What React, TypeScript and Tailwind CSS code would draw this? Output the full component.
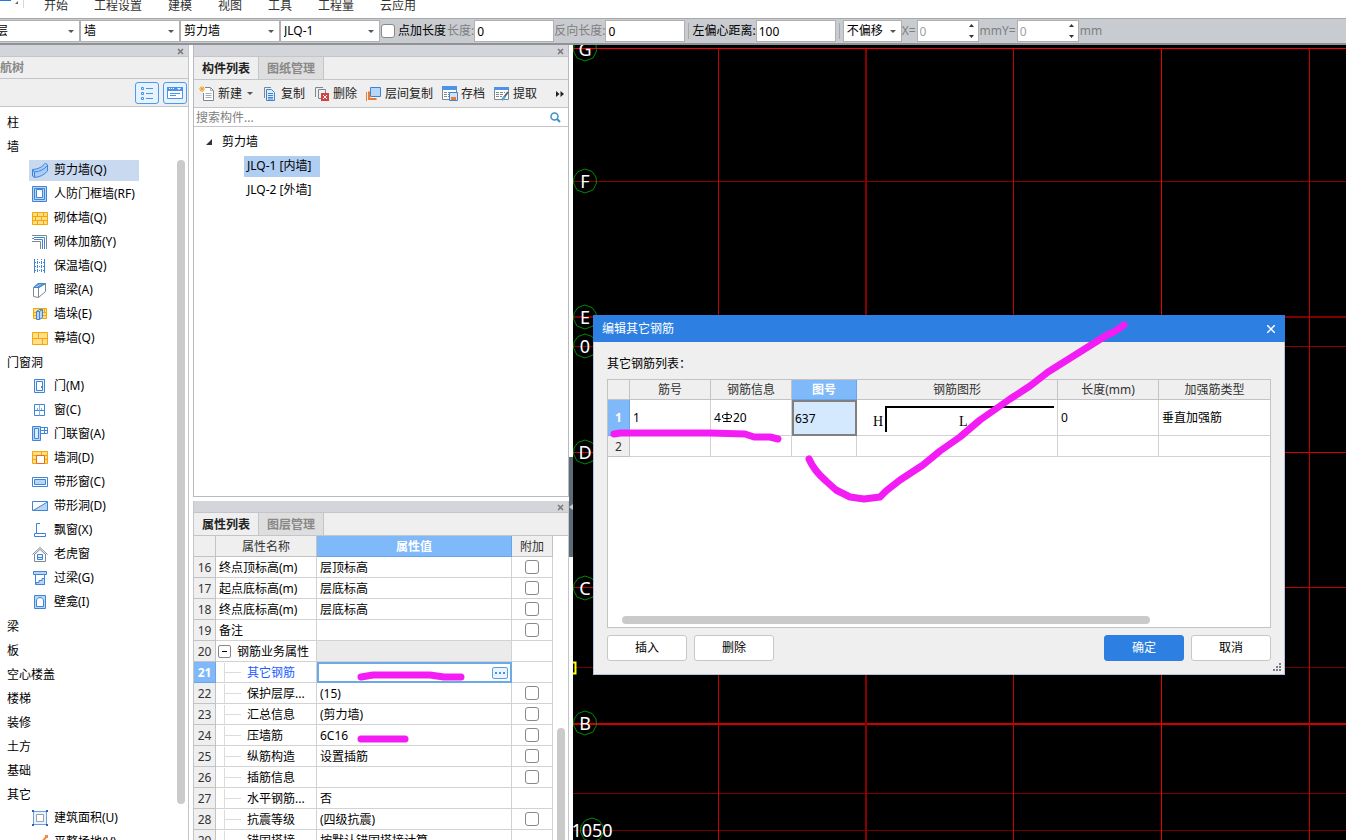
import { useState, type ReactNode } from "react";

const BLUE = "#3f84d6";
const SKY = "#b9d6f7";
const ORANGE = "#f5a900";
const SAND = "#ffdf8e";
const GRAY = "#7d8791";

const icons: Record<string, ReactNode> = {
  shearWall: (
    <>
      <path d="M.5 7.500C7 7 10 5 13.500 1L15.500 3V9C12 13 8 15 2.500 15.500L.5 14z" fill="#a9cdf8" stroke={BLUE} />
      <path d="M1 8l1.500 2C8 9.500 12 7.500 15.500 3.500M2.500 10V15" fill="none" stroke={BLUE} />
    </>
  ),
  frameWall: (
    <>
      <path d="M.5.5h14v15H.5z" fill={SKY} stroke={BLUE} />
      <path d="M2.500 2.500h10v11h-10z" fill={SKY} stroke={BLUE} />
      <path d="M4.500 3.500h6v8h-6z" fill="#fff" stroke={BLUE} />
    </>
  ),
  brick: (
    <path d="M.5 2.500h15v12H.5zM.5 6.500h15M.5 10.500h15M5.500 2.500v4M11.500 2.500v4M3.500 6.500v4M9.500 6.500v4M5.500 10.500v4M11.500 10.500v4" fill={SAND} stroke={ORANGE} />
  ),
  rebarWall: (
    <>
      <path d="M0 1.500h14.500V15M0 4.500h2M0 7.500h8.500V15" fill="none" stroke={GRAY} />
      <path d="M2 3.500h10.500V15M2 5.500h8.500V15" fill="none" stroke={BLUE} />
    </>
  ),
  insulation: (
    <>
      <path d="M2.500 1v14M12.500 1v14" stroke={BLUE} />
      <path d="M5.500 1v14M9.500 1v14M3 4.500h9M3 8.500h9M3 12.500h9" stroke={BLUE} strokeDasharray="1 1" />
    </>
  ),
  hiddenBeam: (
    <>
      <path d="M1.500 5.500L6 1.500h7.500l-4 4z" fill={SKY} stroke={BLUE} />
      <path d="M1.500 5.500h5v10l-5-1zM6.500 5.500l7-4v8l-7 6" fill="#fff" stroke={GRAY} />
      <path d="M2 5.500h5l6.500-4M3 4.500l5-3M5 5.500l6-4" stroke={BLUE} fill="none" />
    </>
  ),
  pier: (
    <>
      <path d="M1.500 2.500h13v10h-13zM1.500 6.500h13M1.500 9.500h13M12.500 2.500v4" fill={SAND} stroke={ORANGE} />
      <path d="M4.500 5.500l3-2h3v8l-3 2h-3zM7.500 5.500v8M4.500 5.500h3l3-2" fill={SKY} stroke={BLUE} />
    </>
  ),
  curtain: (
    <path d="M.5 2.500h15v12H.5zM.5 8.500h15M6.500 2.500v6M10.500 8.500v6" fill={SAND} stroke={ORANGE} />
  ),
  door: (
    <>
      <path d="M2.500 1.500h10v13h-10z" fill="#e6f1fd" stroke={BLUE} />
      <path d="M4.500 3.500h6v9h-6z" fill="#fff" stroke={BLUE} />
      <path d="M9 8h1v2H9z" fill={BLUE} />
    </>
  ),
  window: (
    <>
      <path d="M2.500 2.500h10v11h-10zM2.500 8.500h10" fill="#fff" stroke={BLUE} />
      <path d="M7.500 2.500v11M5.500 6v2M9.500 6v2" stroke="#7fb0ea" />
    </>
  ),
  doorWindow: (
    <>
      <path d="M.5.5h8v14h-8z" fill={SKY} stroke={BLUE} />
      <path d="M2.500 2.500h4v10h-4z" fill="#dcebfc" stroke={BLUE} />
      <path d="M8.500 1.500h7v6h-7zM12.500 1.500v6M8.500 4.500h7" fill="#fff" stroke={BLUE} />
    </>
  ),
  wallHole: (
    <>
      <path d="M.5 1.500h15v12H.5zM.5 5.500h15M.5 9.500h15M9.500 1.500v4" fill={SAND} stroke={ORANGE} />
      <path d="M4.500 5.500h8v8h-8z" fill="#fff" stroke="#ea6a20" />
    </>
  ),
  stripWindow: (
    <>
      <path d="M.5 3.500h15v9H.5z" fill="#fff" stroke={BLUE} />
      <path d="M2.500 5.500h11v5h-11z" fill={SKY} stroke={BLUE} />
    </>
  ),
  stripHole: (
    <>
      <path d="M.5 3.500h15v9H.5z" fill="#fff" stroke={BLUE} />
      <path d="M1 12.500L15.500 4v8.500z" fill={SKY} stroke={BLUE} />
    </>
  ),
  bayWindow: <path d="M8 1.500H4.500v10M2.500 11.500h11v3h-11z" fill="none" stroke={BLUE} />,
  dormer: (
    <>
      <path d="M.5 8.500l7.500-7 7.500 7M2.500 8v7.500h11V8" fill="none" stroke={GRAY} />
      <path d="M3 8l5-4.500L13 8" fill="none" stroke={GRAY} />
      <path d="M5.500 8.500h5v5h-5zM5.500 11.500h5" fill="#e6f1fd" stroke={BLUE} />
    </>
  ),
  lintel: (
    <>
      <path d="M1.500 1.500h13v3h-13z" fill={SKY} stroke={BLUE} />
      <path d="M3.500 4.500h9v10h-9z" fill="#fff" stroke={BLUE} />
      <path d="M4 12.500h3v-2h3v-2h2.500v6H4z" fill={SKY} stroke={BLUE} />
    </>
  ),
  niche: (
    <>
      <path d="M2.500 1.500h11v13h-11z" fill={SKY} stroke={BLUE} />
      <path d="M4.500 12.500V7c0-4.500 7-4.500 7 0v5.500z" fill="#fff" stroke={BLUE} />
    </>
  ),
  area: (
    <>
      <path d="M1.500 1.500h13v13h-13z" fill="#eaf3fd" stroke="#6b9fe0" />
      <path d="M4.500 4.500h7v7h-7z" fill="#fff" stroke="#9aa0a8" />
      <path d="M0 0h2v2H0zM14 0h2v2h-2zM0 14h2v2H0zM14 14h2v2h-2z" fill="#35619c" />
    </>
  ),
  ground: <path d="M2 12l5-4 2 1 6-7M13 2h2v2M6 9l3 3" fill="none" stroke="#f08a4b" strokeWidth="2" />,
  create: (
    <>
      <path d="M6 1.500h5.500l3 3v10h-10V7" fill="#fff" stroke={GRAY} />
      <path d="M11.500 1.500v3h3M6.500 7.500h6M6.500 9.500h6M6.500 11.500h6" fill="none" stroke="#a7adb4" />
      <path d="M1 1l4 4M5 1L1 5M3 0v6M0 3h6" stroke="#f6a11f" />
    </>
  ),
  copy: (
    <>
      <path d="M9 1.500H2.500V12" fill="none" stroke={GRAY} />
      <path d="M4.500 3.500h5l3 3v8h-8z" fill="#dcebfc" stroke={BLUE} />
      <path d="M6 7.500h5M6 9.500h5M6 11.500h5M6 13h5" stroke={BLUE} />
    </>
  ),
  remove: (
    <>
      <path d="M9 1.500H1.500V11M11.500 7V3.500h-7v9H7" fill="none" stroke={GRAY} />
      <path d="M7 7h8v8H7z" fill="#cf4343" />
      <path d="M9 9l4 4M13 9l-4 4" stroke="#fff" />
    </>
  ),
  layerCopy: (
    <>
      <path d="M.5 6v9" fill="none" stroke="#ee7a2d" />
      <path d="M3 5.500v7.500h7.500" fill="none" stroke="#ee7a2d" strokeWidth="2" />
      <path d="M4.500 1.500h10v9h-10z" fill={SKY} stroke={BLUE} />
    </>
  ),
  archive: (
    <>
      <path d="M.5.5h14v13H.5z" fill="#fff" stroke={GRAY} />
      <path d="M0 0h15v4H0z" fill="#4d94e8" />
      <path d="M2 6.500h11M2 8.500h6M2 10.500h5" stroke={GRAY} strokeDasharray="3 1" />
      <path d="M7.500 6.500h8v8h-8z" fill="#cfe2fa" stroke={BLUE} />
      <path d="M9 11h5v3H9z" fill="#ee7a2d" />
    </>
  ),
  extract: (
    <>
      <path d="M.5 1.500h14v12H.5z" fill="#fff" stroke={GRAY} />
      <path d="M0 1h15v3H0z" fill="#4d94e8" />
      <path d="M2 6.500h9M2 8.500h7M2 10.500h6" stroke={GRAY} strokeDasharray="3 1" />
      <path d="M8 14l6-8" stroke="#5d6670" strokeWidth="2" />
      <path d="M8 14l3-3" stroke="#42b4e6" strokeWidth="2" />
    </>
  ),
};

function Icon({ name }: { name: string }) {
  return (
    <svg width="16" height="16" viewBox="0 0 16 16" className="shrink-0" aria-hidden="true">
      {icons[name]}
    </svg>
  );
}

type Node = { label: string; children?: [string, string][] };

const tree: Node[] = [
  { label: "柱" },
  {
    label: "墙",
    children: [
      ["shearWall", "剪力墙(Q)"],
      ["frameWall", "人防门框墙(RF)"],
      ["brick", "砌体墙(Q)"],
      ["rebarWall", "砌体加筋(Y)"],
      ["insulation", "保温墙(Q)"],
      ["hiddenBeam", "暗梁(A)"],
      ["pier", "墙垛(E)"],
      ["curtain", "幕墙(Q)"],
    ],
  },
  {
    label: "门窗洞",
    children: [
      ["door", "门(M)"],
      ["window", "窗(C)"],
      ["doorWindow", "门联窗(A)"],
      ["wallHole", "墙洞(D)"],
      ["stripWindow", "带形窗(C)"],
      ["stripHole", "带形洞(D)"],
      ["bayWindow", "飘窗(X)"],
      ["dormer", "老虎窗"],
      ["lintel", "过梁(G)"],
      ["niche", "壁龛(I)"],
    ],
  },
  { label: "梁" },
  { label: "板" },
  { label: "空心楼盖" },
  { label: "楼梯" },
  { label: "装修" },
  { label: "土方" },
  { label: "基础" },
  {
    label: "其它",
    children: [
      ["area", "建筑面积(U)"],
      ["ground", "平整场地(V)"],
    ],
  },
];

type Row = { n: number; name: string; value?: string; check?: boolean; kind?: "group" | "child" };

const rows: Row[] = [
  { n: 16, name: "终点顶标高(m)", value: "层顶标高", check: true },
  { n: 17, name: "起点底标高(m)", value: "层底标高", check: true },
  { n: 18, name: "终点底标高(m)", value: "层底标高", check: true },
  { n: 19, name: "备注", check: true },
  { n: 20, name: "钢筋业务属性", kind: "group" },
  { n: 21, name: "其它钢筋", kind: "child" },
  { n: 22, name: "保护层厚...", value: "(15)", check: true, kind: "child" },
  { n: 23, name: "汇总信息", value: "(剪力墙)", check: true, kind: "child" },
  { n: 24, name: "压墙筋", value: "6C16", check: true, kind: "child" },
  { n: 25, name: "纵筋构造", value: "设置插筋", check: true, kind: "child" },
  { n: 26, name: "插筋信息", check: true, kind: "child" },
  { n: 27, name: "水平钢筋...", value: "否", kind: "child" },
  { n: 28, name: "抗震等级", value: "(四级抗震)", check: true, kind: "child" },
  { n: 29, name: "锚固搭接", value: "按默认锚固搭接计算", kind: "child" },
];

const hLines = [
  { y: 3, c: "#ff0000", w: 1 },
  { y: 136, c: "#8c0000", w: 1 },
  { y: 271, c: "#800000", w: 2 },
  { y: 301, c: "#900000", w: 1 },
  { y: 407, c: "#d80000", w: 1 },
  { y: 542, c: "#c00000", w: 1 },
  { y: 622, c: "#700000", w: 1 },
  { y: 678, c: "#d00000", w: 2 },
  { y: 748, c: "#800000", w: 1 },
  { y: 785, c: "#700000", w: 1 },
];

const vLines = [
  { x: 145, c: "#c80000", w: 1 },
  { x: 292, c: "#880000", w: 2 },
  { x: 440, c: "#c80000", w: 1 },
  { x: 588, c: "#f00000", w: 1 },
  { x: 736, c: "#c00000", w: 1 },
];

const axes = [
  { t: "G", x: 12, y: 4 },
  { t: "F", x: 12, y: 136 },
  { t: "E", x: 12, y: 272 },
  { t: "0", x: 12, y: 301 },
  { t: "D", x: 12, y: 407 },
  { t: "C", x: 12, y: 543 },
  { t: "B", x: 12, y: 678 },
  { t: "1050", x: 19, y: 785 },
];

function PanelStrip() {
  return (
    <div className="flex h-3 shrink-0 items-center justify-end border-b border-[#c3c5cb] bg-[#d3d5da] pr-1">
      <button aria-label="关闭面板" className="flex pt-px">
        <svg width="7" height="7" viewBox="0 0 7 7">
          <path d="M1 1l5 5M6 1L1 6" stroke="#777" strokeWidth="1.500" />
        </svg>
      </button>
    </div>
  );
}

function Tabs({ items }: { items: string[] }) {
  const [active, setActive] = useState(0);
  return (
    <div role="tablist" className="flex h-[23px] shrink-0 border-b border-[#c3c5cb] bg-[#efefef]">
      {items.map((t, i) => (
        <button
          key={t}
          role="tab"
          aria-selected={i === active}
          onClick={() => setActive(i)}
          className={`w-[65px] border-r border-[#c3c5cb] pt-0.5 text-center font-bold ${
            i === active ? "bg-[#efefef] text-[#222]" : "bg-[#dedede] text-[#888]"
          }`}
        >
          {t}
        </button>
      ))}
    </div>
  );
}

function Combo({ label, options, className }: { label: string; options: string[]; className: string }) {
  return (
    <div className={`relative h-[22px] shrink-0 ${className}`}>
      <select aria-label={label} className="h-full w-full appearance-none border border-[#b0b0b0] bg-white pl-[3px] text-black">
        {options.map((o) => (
          <option key={o}>{o}</option>
        ))}
      </select>
      <svg width="6" height="3" viewBox="0 0 6 3" className="pointer-events-none absolute top-[10px] right-[6px]">
        <path d="M0 0h6L3 3z" fill="#555" />
      </svg>
    </div>
  );
}

function Field({ label, value, dim }: { label: string; value: string; dim?: boolean }) {
  return (
    <label className="flex shrink-0 items-center">
      <span className={dim ? "text-[#808080]" : "text-black"}>{label}</span>
      <input defaultValue={value} className="h-[22px] w-20 border border-[#b0b0b0] bg-white px-0.5 text-black" />
    </label>
  );
}

function Spin({ label }: { label: string }) {
  return (
    <label className="flex shrink-0 items-center gap-px text-[#808080]">
      {label}
      <span className="flex h-[22px] w-[62px] items-center border border-[#b0b0b0] bg-white pr-1">
        <input defaultValue="0" disabled className="h-full min-w-0 flex-1 pl-0.5 text-[#a0a0a0]" />
        <svg width="5" height="14" viewBox="0 0 5 14">
          <path d="M0 3h5L2.500 0zM0 11h5l-2.500 3z" fill="#333" />
        </svg>
      </span>
      mm
    </label>
  );
}

function OptionBar() {
  return (
    <div className="flex h-[27px] shrink-0 items-center overflow-hidden border-t border-b-2 border-t-[#a8a8a8] border-b-[#909298] bg-[#c8cbd0] whitespace-nowrap">
      <Combo label="楼层" options={["首层"]} className="-ml-5 w-[100px]" />
      <Combo label="构件类别" options={["墙"]} className="w-[100px]" />
      <Combo label="构件类型" options={["剪力墙"]} className="w-[100px]" />
      <Combo label="构件" options={["JLQ-1", "JLQ-2"]} className="w-[100px]" />
      <label className="mr-px ml-px flex shrink-0 items-center gap-[3px] text-black">
        <input type="checkbox" className="size-[14px] appearance-none rounded-[3px] border border-[#888] bg-white" />
        点加长度
      </label>
      <Field label="长度:" value="0" dim />
      <Field label="反向长度:" value="0" dim />
      <span className="mx-[3px] h-4 w-px shrink-0 bg-[#a8a8a8]" />
      <Field label="左偏心距离:" value="100" />
      <span className="mx-[3px] h-4 w-px shrink-0 bg-[#a8a8a8]" />
      <Combo label="偏移方式" options={["不偏移"]} className="w-[59px]" />
      <Spin label="X=" />
      <Spin label="Y=" />
    </div>
  );
}

function NavTree() {
  const [current, setCurrent] = useState("剪力墙(Q)");
  return (
    <aside className="flex w-[189px] shrink-0 flex-col border-r border-[#c3c5cb]">
      <PanelStrip />
      <div className="h-[22px] shrink-0 overflow-hidden border-b border-[#c3c5cb] bg-[#efefef] leading-[22px] font-bold text-[#888]">
        <span className="-ml-3">导航树</span>
      </div>
      <div className="flex h-7 shrink-0 items-center justify-end gap-1 border-b border-[#c3c5cb] bg-[#efefef] pr-px">
        <button aria-label="列表" className="flex h-[22px] w-6 items-center justify-center rounded-[3px] border border-[#4a9af0] bg-[#e6f2fe]">
          <svg width="14" height="14" viewBox="0 0 14 14" fill="none" stroke="#4a94e6">
            <path d="M1.500 1.500h2v2h-2zM1.500 6.500h2v2h-2zM1.500 11.500h2v2h-2zM6 2.500h7M6 7.500h7M6 12.500h7" />
          </svg>
        </button>
        <button aria-label="窗口" className="flex h-[22px] w-6 items-center justify-center rounded-[3px] border border-[#4a9af0] bg-[#e6f2fe]">
          <svg width="16" height="14" viewBox="0 0 16 14">
            <path d="M.5 1.500h15v11H.5z" fill="#fff" stroke="#4a94e6" />
            <path d="M0 1h16v4H0z" fill="#4a94e6" />
            <path d="M2 2.500h1M4 2.500h1M6 2.500h1" stroke="#fff" />
            <path d="M10 2h4l-2 2z" fill="#fff" />
            <path d="M3 7.500h10M3 9.500h6" stroke="#4a94e6" />
          </svg>
        </button>
      </div>
      <div className="flex min-h-0 flex-1 bg-white">
        <ul className="min-w-0 flex-1 overflow-hidden pt-[3px]">
          {tree.map((g) => (
            <li key={g.label}>
              <button className="block h-6 pt-px pl-[7px]">{g.label}</button>
              {g.children && (
                <ul>
                  {g.children.map(([icon, label]) => (
                    <li key={label} className="flex h-6 items-center pl-[29px]">
                      <button
                        onClick={() => setCurrent(label)}
                        className={`flex h-[21px] w-[110px] items-center gap-1.5 pl-[3px] whitespace-nowrap ${
                          label === current ? "bg-[#c9d9f0]" : ""
                        }`}
                      >
                        <Icon name={icon} />
                        {label}
                      </button>
                    </li>
                  ))}
                </ul>
              )}
            </li>
          ))}
        </ul>
        <div className="w-[11px] shrink-0 pt-[53px]">
          <div className="h-[644px] w-2 rounded-full bg-[#cacaca]" />
        </div>
      </div>
    </aside>
  );
}

function Tool({ icon, label, menu }: { icon: string; label: string; menu?: boolean }) {
  return (
    <button className="flex shrink-0 items-center gap-[3px] text-[#222]">
      <Icon name={icon} />
      <span className="pt-px">{label}</span>
      {menu && (
        <svg width="8" height="3" viewBox="0 0 8 3">
          <path d="M2 0h6L5 3z" fill="#555" />
        </svg>
      )}
    </button>
  );
}

function ComponentPanel() {
  return (
    <section className="flex min-h-0 flex-[452] flex-col border-x border-b border-[#b8babf] bg-white">
      <PanelStrip />
      <Tabs items={["构件列表", "图纸管理"]} />
      <div className="flex h-7 shrink-0 items-center gap-[9px] border-b border-[#c3c5cb] bg-[#efefef] pr-1 pl-[5px] whitespace-nowrap">
        <Tool icon="create" label="新建" menu />
        <Tool icon="copy" label="复制" />
        <Tool icon="remove" label="删除" />
        <Tool icon="layerCopy" label="层间复制" />
        <Tool icon="archive" label="存档" />
        <Tool icon="extract" label="提取" />
        <button aria-label="更多" className="ml-auto">
          <svg width="8" height="6" viewBox="0 0 8 6">
            <path d="M0 0l3.500 3L0 6zM4.500 0L8 3 4.500 6z" fill="#222" />
          </svg>
        </button>
      </div>
      <div className="flex h-[19px] shrink-0 items-center border-b border-[#c3c5cb] pr-[7px] pl-0.5">
        <input aria-label="搜索构件" placeholder="搜索构件..." className="h-[18px] min-w-0 flex-1 pt-px placeholder:text-[#808080]" />
        <svg width="11" height="11" viewBox="0 0 11 11" fill="none" stroke="#3d8fc8">
          <circle cx="4.500" cy="4.500" r="3.500" strokeWidth="1.500" />
          <path d="M7 7l3 3" strokeWidth="2" />
        </svg>
      </div>
      <ul className="pt-[3px]">
        <li className="flex h-6 items-center gap-2.5 pl-3">
          <svg width="6" height="6" viewBox="0 0 6 6">
            <path d="M6 0v6H0z" fill="#333" />
          </svg>
          剪力墙
        </li>
        <li className="flex h-6 items-center pl-[50px]">
          <button className="h-[21px] w-[76px] bg-[#b0cdf2] px-[3px] text-left">JLQ-1 [内墙]</button>
        </li>
        <li className="flex h-6 items-center pl-[50px]">
          <button className="h-[21px] w-[76px] px-[3px] text-left">JLQ-2 [外墙]</button>
        </li>
      </ul>
    </section>
  );
}

function PropertyRow({ row }: { row: Row }) {
  const active = row.n === 21;
  const cell = "h-[21px] border-r border-b border-[#d2d2d2] p-0 pt-px";
  return (
    <tr>
      <th
        className={`h-[21px] border-r border-b p-0 pt-px text-center ${
          active ? "border-[#6aa5e6] bg-[#80b9f9] font-bold text-white" : "border-[#c3c3c3] bg-[#efefef] font-normal text-[#333]"
        }`}
      >
        {row.n}
      </th>
      <td className={`${cell} ${active ? "text-[#1a5cff]" : ""}`}>
        {row.kind === "child" ? (
          <div className="flex h-[19px] items-center gap-[5px] pl-2">
            <svg width="18" height="19" viewBox="0 0 18 19">
              <path d="M.5 0v19M.5 9.500H17" stroke="#dcdcdc" fill="none" />
            </svg>
            {row.name}
          </div>
        ) : row.kind === "group" ? (
          <div className="flex h-[19px] items-center gap-1.5 pl-0.5">
            <button aria-label="折叠" className="flex size-[13px] items-center justify-center rounded-[2px] border border-[#888] bg-white">
              <span className="h-px w-[5px] bg-black" />
            </button>
            {row.name}
          </div>
        ) : (
          <div className="pl-[3px]">{row.name}</div>
        )}
      </td>
      {active ? (
        <td className="h-[21px] p-0">
          <div className="flex h-[21px] items-center border-2 border-[#6aaae8] bg-white pr-0.5">
            <input aria-label="其它钢筋" className="h-4 min-w-0 flex-1 px-0.5" />
            <button aria-label="编辑" className="flex h-3 w-4 items-center justify-center rounded-[2px] border border-[#5c9fde] bg-[#eaf4fe]">
              <svg width="10" height="2" viewBox="0 0 10 2">
                <path d="M0 0h2v2H0zM4 0h2v2H4zM8 0h2v2H8z" fill="#4a90d9" />
              </svg>
            </button>
          </div>
        </td>
      ) : (
        <td className={`${cell} ${row.kind === "group" ? "bg-[#ebebeb]" : ""}`}>
          <div className="pl-[3px]">{row.value}</div>
        </td>
      )}
      <td className="h-[21px] border-r border-b border-[#d2d2d2] p-0">
        {row.check && (
          <input
            type="checkbox"
            aria-label={`${row.name} 附加`}
            className="mx-auto block size-[14px] appearance-none rounded-[3px] border border-[#888] bg-white"
          />
        )}
      </td>
    </tr>
  );
}

function PropertyPanel() {
  const head = "h-[21px] border-r border-b p-0 pt-px text-center";
  return (
    <section className="flex min-h-0 flex-[339] flex-col overflow-hidden border-x border-[#c3c5cb] bg-white">
      <PanelStrip />
      <Tabs items={["属性列表", "图层管理"]} />
      <div className="flex min-h-0 flex-1">
        <div className="min-w-0 flex-1 overflow-hidden">
          <table className="w-full table-fixed border-separate border-spacing-0 leading-[19px] whitespace-nowrap">
            <colgroup>
              <col className="w-[22px]" />
              <col className="w-[101px]" />
              <col />
              <col className="w-[41px]" />
            </colgroup>
            <thead>
              <tr>
                <th className={`${head} border-[#c3c3c3] bg-[#efefef]`} />
                <th className={`${head} border-[#c3c3c3] bg-[#efefef] font-normal text-[#333]`}>属性名称</th>
                <th className={`${head} border-[#6aa5e6] bg-[#80b9f9] font-bold text-white`}>属性值</th>
                <th className={`${head} border-[#c3c3c3] bg-[#efefef] font-normal text-[#333]`}>附加</th>
              </tr>
            </thead>
            <tbody>
              {rows.map((r) => (
                <PropertyRow key={r.n} row={r} />
              ))}
            </tbody>
          </table>
        </div>
        <div className="flex w-[15px] shrink-0 justify-center pt-48">
          <div className="w-2 rounded-t-full bg-[#cacaca]" />
        </div>
      </div>
    </section>
  );
}

function Drawing() {
  return (
    <svg className="block h-full w-full" aria-label="轴网">
      {hLines.map((l) => (
        <rect key={l.y} x="0" y={l.y} width="100%" height={l.w} fill={l.c} />
      ))}
      {vLines.map((l) => (
        <rect key={l.x} x={l.x} y="4" width={l.w} height="100%" fill={l.c} />
      ))}
      {axes.map((a) => (
        <g key={a.t} transform={`translate(${a.x} ${a.y})`}>
          <path d="M0-12L7-9.500 11-4 11.500 2 8 9 0 12-8 9-11.500 2-11-4-7-9.500z" fill="none" stroke="#008a00" />
          <text y="7" textAnchor="middle" fontSize="18" fill="#fff">
            {a.t}
          </text>
        </g>
      ))}
      <path d="M0 617.500h2.500v11H0" fill="none" stroke="#ffff00" strokeWidth="2" />
    </svg>
  );
}

function RebarDialog() {
  const head = "h-5 border-r border-b border-[#c3c3c3] bg-[#efefef] p-0 text-center font-normal text-[#333] last:border-r-0";
  const cell = "border-r border-b border-[#d2d2d2] px-[3px] py-0 last:border-r-0";
  const button = "h-[26px] w-20 rounded-[3px] border text-center";
  return (
    <div role="dialog" aria-label="编辑其它钢筋" className="absolute top-[270px] left-5 flex h-[360px] w-[692px] flex-col bg-[#efefef] text-black">
      <div className="flex h-[27px] shrink-0 items-center justify-between bg-[#2d80e2] pr-[10px] pl-[9px] text-white">
        编辑其它钢筋
        <button aria-label="关闭">
          <svg width="8" height="8" viewBox="0 0 8 8">
            <path d="M0 0l8 8M8 0L0 8" stroke="#fff" strokeWidth="1.500" />
          </svg>
        </button>
      </div>
      <div className="relative flex min-h-0 flex-1 flex-col border-x border-b border-[#b4c4de] px-[13px] pt-[14px]">
        <p className="leading-4">其它钢筋列表：</p>
        <div className="mt-[7px] flex h-[249px] flex-col justify-between border border-[#c3c3c3] bg-white">
          <table className="w-full table-fixed border-separate border-spacing-0 leading-[19px]">
            <colgroup>
              <col className="w-[22px]" />
              <col className="w-[81px]" />
              <col className="w-[81px]" />
              <col className="w-[65px]" />
              <col className="w-[201px]" />
              <col className="w-[101px]" />
              <col />
            </colgroup>
            <thead>
              <tr>
                <th className={head} />
                <th className={head}>筋号</th>
                <th className={head}>钢筋信息</th>
                <th className="h-5 border-r border-b border-[#6aa5e6] bg-[#80b9f9] p-0 text-center font-bold text-white">图号</th>
                <th className={head}>钢筋图形</th>
                <th className={head}>长度(mm)</th>
                <th className={head}>加强筋类型</th>
              </tr>
            </thead>
            <tbody>
              <tr className="h-9">
                <th className="border-r border-b border-[#6aa5e6] bg-[#80b9f9] p-0 text-center font-bold text-white">1</th>
                <td className={cell}>1</td>
                <td className={cell}>
                  <span className="flex items-center">
                    4
                    <svg width="12" height="12" viewBox="0 0 12 12" fill="none" stroke="#000">
                      <path d="M3.500 2.500h5l2 1v2l-2 1h-5l-2-1v-2zM6 0v10M2 9.500h8" />
                    </svg>
                    20
                  </span>
                </td>
                <td className="border-2 border-[#808080] bg-[#d4e8fe] px-px py-0">637</td>
                <td className="border-r border-b border-[#d2d2d2] p-0">
                  <svg width="200" height="34" viewBox="0 0 200 34" className="block">
                    <path d="M29 31V6h168" fill="none" stroke="#000" strokeWidth="2" />
                    <text x="16" y="25" fontSize="14" className="font-['Liberation_Serif',serif]">
                      H
                    </text>
                    <text x="102" y="25" fontSize="14" className="font-['Liberation_Serif',serif]">
                      L
                    </text>
                  </svg>
                </td>
                <td className={cell}>0</td>
                <td className={cell}>垂直加强筋</td>
              </tr>
              <tr className="h-[21px]">
                <th className="border-r border-b border-[#c3c3c3] bg-[#efefef] p-0 text-center font-normal text-[#333]">2</th>
                <td className={cell} />
                <td className={cell} />
                <td className={cell} />
                <td className={cell} />
                <td className={cell} />
                <td className={cell} />
              </tr>
            </tbody>
          </table>
          <div className="mb-[3px] ml-[14px] h-2 w-[528px] rounded-full bg-[#cacaca]" />
        </div>
        <div className="mt-[7px] flex gap-[7px]">
          <button className={`${button} border-[#c8c8c8] bg-white`}>插入</button>
          <button className={`${button} border-[#c8c8c8] bg-white`}>删除</button>
          <button className={`${button} ml-auto border-[#2d80e2] bg-[#2d80e2] text-white`}>确定</button>
          <button className={`${button} border-[#c8c8c8] bg-white`}>取消</button>
        </div>
        <svg width="8" height="8" viewBox="0 0 8 8" className="absolute right-[3px] bottom-[3px]">
          <path d="M6 0h2v2H6zM3 3h2v2H3zM6 3h2v2H6zM0 6h2v2H0zM3 6h2v2H3zM6 6h2v2H6z" fill="#777c86" />
        </svg>
      </div>
    </div>
  );
}

function Marks() {
  return (
    <svg
      className="pointer-events-none absolute inset-0 h-full w-full"
      fill="none"
      stroke="#f41cf4"
      strokeWidth="7"
      strokeLinecap="round"
      strokeLinejoin="round"
    >
      <path d="M614 434L620 433H710L745 434 754 437 770 437 778 439" />
      <path d="M809 459C813 468 819 475 826 481L836 490 850 497 864 499 880 497 886 491 900 480 923 465 940 451 960 437 980 420 1010 399 1030 386 1048 372 1107 335 1114 332 1124 325" />
      <path d="M361 677L373 675H430L444 677H461" />
      <path d="M361 739H371L385 739H405" />
    </svg>
  );
}

export default function App() {
  const menus = ["开始", "工程设置", "建模", "视图", "工具", "工程量", "云应用"];
  return (
    <div className="relative flex h-screen flex-col overflow-hidden bg-white font-['Noto_Sans','Noto_Sans_CJK_SC',sans-serif] text-[12px] leading-5 text-black">
      <nav className="flex h-[18px] shrink-0 items-start overflow-hidden">
        <svg width="44" height="10" viewBox="0 0 44 10" className="shrink-0">
          <path d="M0 0h11v1H0z" fill="#1f7ae0" />
          <path d="M18 1v3h-3z" fill="#666" />
          <path d="M23.500 0v8" stroke="#d8d8d8" />
        </svg>
        <div className="flex gap-[26px] leading-3 text-[#333]">
          {menus.map((m) => (
            <a key={m} href="#">
              {m}
            </a>
          ))}
        </div>
      </nav>
      <OptionBar />
      <main className="flex min-h-0 flex-1">
        <NavTree />
        <div className="w-1 shrink-0" />
        <div className="flex w-[376px] shrink-0 flex-col gap-1">
          <ComponentPanel />
          <PropertyPanel />
        </div>
        <div className="w-1 shrink-0 pt-[412px]">
          <button aria-label="收起" className="flex h-[100px] w-1 items-center bg-[#606b78]">
            <svg width="4" height="6" viewBox="0 0 4 6">
              <path d="M4 0v6L0 3z" fill="#c8cdd4" />
            </svg>
          </button>
        </div>
        <div className="relative min-w-0 flex-1 overflow-hidden bg-black">
          <Drawing />
          <RebarDialog />
        </div>
      </main>
      <Marks />
    </div>
  );
}
